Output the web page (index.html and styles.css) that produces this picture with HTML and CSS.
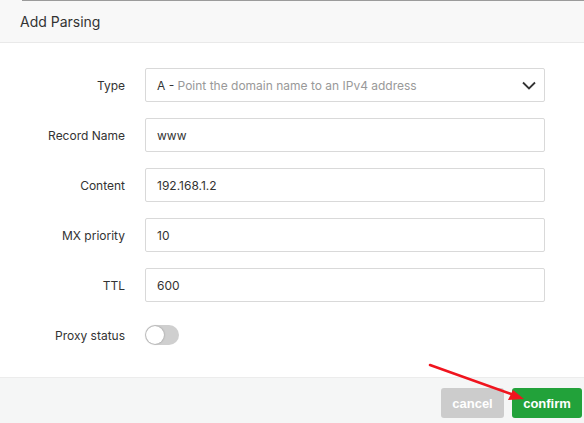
FILE: index.html
```html
<!DOCTYPE html>
<html lang="en">
<head>
    <meta charset="UTF-8">
    <meta name="viewport" content="width=device-width, initial-scale=1.0">
    <title>Add Parsing</title>
    <link rel="stylesheet" href="styles.css">
</head>
<body>

<div class="dialog">
    <div class="dialog-header">Add Parsing</div>

    <div class="dialog-body">
        <div class="form-row">
            <label class="form-label">Type</label>
            <div class="form-select">
                <span class="select-text"><span class="select-value">A - </span>Point the domain name to an IPv4 address</span>
                <svg class="select-arrow" width="14" height="9" viewBox="0 0 14 9">
                    <path d="M1 1.5 L7 7.5 L13 1.5" fill="none" stroke="#333" stroke-width="1.8"/>
                </svg>
            </div>
        </div>
        <div class="form-row">
            <label class="form-label">Record Name</label>
            <input class="form-input" type="text" value="www">
        </div>
        <div class="form-row">
            <label class="form-label">Content</label>
            <input class="form-input" type="text" value="192.168.1.2">
        </div>
        <div class="form-row">
            <label class="form-label">MX priority</label>
            <input class="form-input" type="text" value="10">
        </div>
        <div class="form-row">
            <label class="form-label">TTL</label>
            <input class="form-input" type="text" value="600">
        </div>
        <div class="form-row">
            <label class="form-label">Proxy status</label>
            <span class="switch"><span class="switch-knob"></span></span>
        </div>
    </div>

    <div class="dialog-footer">
        <button class="btn btn-cancel">cancel</button>
        <button class="btn btn-confirm">confirm</button>
        <!-- pointer drawn over the footer -->
        <svg class="pointer" width="110" height="45" viewBox="0 0 110 45">
            <line x1="2" y1="2" x2="86" y2="32" stroke="#f0141e" stroke-width="2.5" stroke-linecap="round"/>
            <polygon points="96,36 80,37 85,27" fill="#f0141e"/>
        </svg>
    </div>
</div>

</body>
</html>
```

FILE: styles.css
```css
body {
    margin: 0;
    font-family: Inter, "Noto Sans", sans-serif;
    background: #fff;
    color: #333;
}
.dialog {
    width: 584px;
    height: 423px;
    overflow: hidden;
}
.dialog-header {
    height: 43px;
    box-sizing: border-box;
    padding: 0 20px;
    display: flex;
    align-items: center;
    font-size: 14px;
    color: #333;
    background: linear-gradient(#9b9b9b, #9b9b9b) 22px 0 / 100% 1px no-repeat, #f8f8f8;
    border-bottom: 1px solid #e9e9e9;
}
.dialog-body {
    padding: 25px 39px 25px 0;
    display: flex;
    flex-direction: column;
    gap: 16px;
}
.form-row {
    display: flex;
    align-items: center;
    height: 34px;
}
.form-label {
    width: 125px;
    padding-right: 20px;
    text-align: right;
    font-size: 12px;
    color: #333;
    flex-shrink: 0;
}
.form-input,
.form-select {
    flex: 1;
    height: 34px;
    box-sizing: border-box;
    border: 1px solid #d9d9d9;
    border-radius: 2px;
    padding: 0 11px;
    font-family: inherit;
    font-size: 12px;
    color: #333;
    background: #fff;
    outline: none;
}
.form-select {
    display: flex;
    align-items: center;
    justify-content: space-between;
}
.select-text {
    color: #999;
}
.select-value {
    color: #333;
}
.select-arrow {
    margin-right: -3px;
}
.switch {
    width: 34px;
    height: 20px;
    border-radius: 10px;
    background: #cfcfcf;
    display: flex;
    align-items: center;
    padding: 1px;
    box-sizing: border-box;
}
.switch-knob {
    width: 18px;
    height: 18px;
    border-radius: 50%;
    background: #fff;
    box-shadow: 0 0 2px rgba(0, 0, 0, 0.35);
}
.dialog-footer {
    position: relative;
    height: 46px;
    box-sizing: border-box;
    padding: 10px 2px 0 0;
    display: flex;
    justify-content: flex-end;
    align-items: flex-start;
    gap: 8px;
    background: #f5f6f6;
    border-top: 1px solid #ececec;
}
.btn {
    height: 30px;
    border: none;
    border-radius: 3px;
    font-family: "Liberation Sans", Arial, sans-serif;
    font-size: 13px;
    font-weight: bold;
    color: #fff;
    cursor: pointer;
}
.btn-cancel {
    width: 63px;
    background: #cccccc;
}
.btn-confirm {
    width: 70px;
    background: #22a23a;
}
.pointer {
    position: absolute;
    left: 428px;
    top: -15px;
}
```
